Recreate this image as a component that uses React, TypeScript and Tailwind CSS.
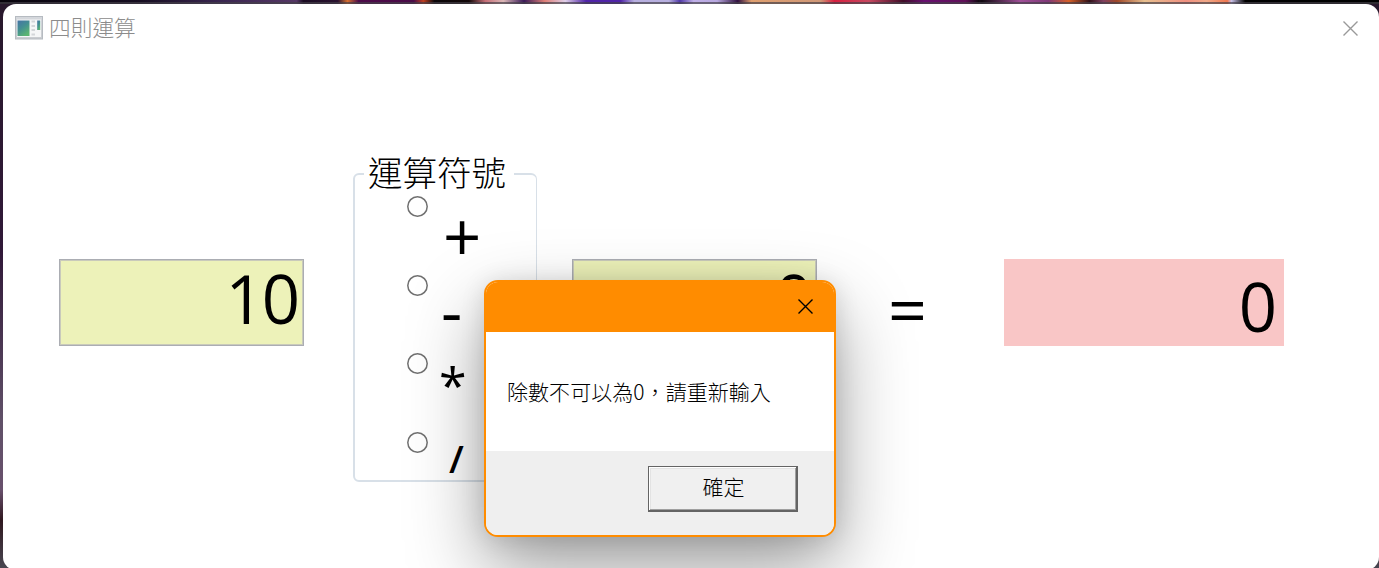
import React from "react";

const latin = "font-['Open_Sans','Noto_Sans_CJK_TC',sans-serif]";
const cjk = "font-['Noto_Sans_CJK_TC',sans-serif]";

function AppIcon() {
  return (
    <svg width="28" height="24" viewBox="0 0 28 24" className="shrink-0">
      <defs>
        <linearGradient id="pane" x1="0" y1="0" x2="0.6" y2="1">
          <stop offset="0" stopColor="#4673a6" />
          <stop offset="0.5" stopColor="#438f92" />
          <stop offset="1" stopColor="#5cb572" />
        </linearGradient>
        <linearGradient id="frame" x1="0" y1="0" x2="0" y2="1">
          <stop offset="0" stopColor="#d5d8dd" />
          <stop offset="1" stopColor="#c9ccd0" />
        </linearGradient>
      </defs>
      <rect x="0.5" y="0.5" width="27" height="22.5" fill="url(#frame)" stroke="#b6bbc1" />
      <rect x="2" y="3.5" width="24" height="17.5" fill="#f5f6f7" />
      <rect x="2.5" y="4.5" width="12" height="15.5" fill="url(#pane)" />
      <path d="M16.5 5.5h3.5M16.5 10h3.5M16.5 14h3.5M16.5 18.5h3.5" stroke="#d3d6d9" strokeWidth="2" />
      <rect x="22.2" y="4.5" width="3" height="9.5" fill="url(#pane)" />
    </svg>
  );
}

function Cross({ className }: { className: string }) {
  return (
    <svg width="15" height="15" viewBox="0 0 15 15" className={className}>
      <path d="M0.5 0.5L14.5 14.5M14.5 0.5L0.5 14.5" fill="none" stroke="currentColor" strokeWidth="1.4" />
    </svg>
  );
}

function Operator({ children, className }: { children: string; className: string }) {
  return (
    <label className="flex h-[78.6px] items-start">
      <svg width="21" height="21" viewBox="0 0 21 21" className="shrink-0">
        <circle cx="10.5" cy="10.5" r="9.7" fill="#ffffff" stroke="#707070" strokeWidth="1.5" />
      </svg>
      <span className={`h-0 leading-none ${className}`}>{children}</span>
    </label>
  );
}

function NumberBox({ value, className }: { value: string; className: string }) {
  return (
    <div className={`mt-[86px] h-[87px] w-[245px] shrink-0 border border-[#abadb3] bg-[#edf2b9] pr-[5px] text-right text-[67px] leading-[76px] tracking-[-2px] ring-1 ring-[#c9cabb] ring-inset ${className}`}>
      {value}
    </div>
  );
}

function MessageBox() {
  return (
    <div className="absolute top-[280px] left-[484px] flex h-[257px] w-[352px] flex-col overflow-hidden rounded-[14px] border-2 border-[#ff8c00] bg-white shadow-[0_32px_76px_rgba(0,0,0,0.38),0_2px_24px_rgba(0,0,0,0.12)]">
      <div className="flex h-[50px] shrink-0 items-center justify-end bg-[#ff8c00] pr-[21px] pb-px">
        <Cross className="text-black" />
      </div>
      <div className={`flex h-[119px] shrink-0 items-center pl-[21px] text-[21px] leading-[31px] font-light tracking-[0.05px] whitespace-nowrap text-black ${cjk}`}>
        除數不可以為0，請重新輸入
      </div>
      <div className="flex grow items-start justify-end bg-[#efefef] pt-[15px] pr-[36px]">
        <button className={`h-[46px] w-[150px] border-t border-r-2 border-b-2 border-l border-[#646464] bg-[#f0f0f0] pb-[3px] pl-[2px] text-[21px] font-light text-black shadow-[inset_1px_1px_0_#ffffff,inset_-1px_-1px_0_#a0a0a0,inset_2px_2px_0_#e3e3e3] ${cjk}`}>
          確定
        </button>
      </div>
    </div>
  );
}

export default function App() {
  return (
    <div className={`relative h-[568px] w-[1379px] overflow-hidden bg-[linear-gradient(90deg,#08040c_0%,#160d20_10%,#3a2650_16%,#553765_21.5%,#1a0b22_22%,#2a1230_24.5%,#d87030_25.2%,#4d0b49_26%,#4a0b48_30%,#c04020_30.7%,#0b0508_31.5%,#120708_34%,#c77078_35.2%,#dcb8b8_36.5%,#3a1a58_38%,#e08078_39.5%,#e0d0ea_41%,#5024a8_42.5%,#5024a8_45%,#b8b0e0_46%,#b8b0e0_48.5%,#5038a8_49.3%,#c0b0e8_50.3%,#b8a8e0_52%,#301040_53.5%,#e0a070_54.5%,#d09878_59.5%,#d82040_60.5%,#c84860_63%,#400c28_65.5%,#681070_67%,#601058_70%,#100810_71%,#180c18_63.4%,#180c18_63.6%,#100810_71.2%,#a05098_74%,#803878_76%,#d86028_77.5%,#301018_79%,#804060_80%,#a04828_81%,#e8c090_83%,#f09080_86%,#f0a888_87.5%,#f07850_89%,#c8c0e8_89.3%,#000000_90.3%,#000000_100%)] ${latin}`}>
      <div className="flex h-full flex-col bg-[linear-gradient(180deg,transparent_0px,transparent_2px,#444048b0_2px,#444048b0_4px,#28182c_4px,#301838_250px,#605068_420px,#68506c_490px,#301820_520px,#484650_568px)] pt-1 pl-[3px]">
        <div className="flex h-[566px] w-[1376px] shrink-0 flex-col rounded-[13px] bg-white">
          <header className="flex h-[48px] shrink-0 items-center pr-[21px] pl-[12px]">
            <AppIcon />
            <span className={`ml-[6px] grow pb-[2px] text-[21.7px] font-light text-[#8c8c8c] ${cjk}`}>四則運算</span>
            <Cross className="mt-px text-[#999999]" />
          </header>
          <main className="flex items-start pt-[121px] pl-[56px] text-black">
            <NumberBox value="10" className="" />
            <fieldset className="ml-[49px] h-[309px] w-[184px] shrink-0 rounded-[6px] border-2 border-r border-[#d8e0e8]">
              <div className={`mt-[-22px] ml-[9px] flex h-[38px] w-[150px] items-center bg-white pl-[4px] text-[34.5px] font-light whitespace-nowrap ${cjk}`}>運算符號</div>
              <div className="mt-[5px] ml-[52px]">
                <Operator className="ml-[15px] pt-[7px] text-[67px]">+</Operator>
                <Operator className="ml-[13px] pt-px text-[66px]">-</Operator>
                <Operator className="ml-[11px] pt-[7px] text-[50px]">*</Operator>
                <Operator className="ml-[21px] pt-[7px] text-[38px] font-semibold">/</Operator>
              </div>
            </fieldset>
            <NumberBox value="0" className="ml-[35px]" />
            <div className="mt-[102px] ml-[71px] w-[40px] shrink-0 text-[68px] leading-none">=</div>
            <div className="mt-[86px] ml-[76px] h-[87px] w-[280px] shrink-0 bg-[#f9c6c6] pr-[7px] text-right text-[67px] leading-[94px]">0</div>
          </main>
        </div>
      </div>
      <MessageBox />
    </div>
  );
}
